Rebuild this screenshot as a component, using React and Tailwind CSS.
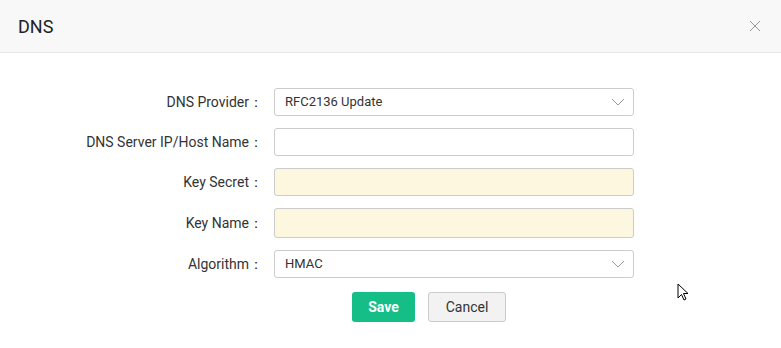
import React from 'react'

function Chevron() {
  return (
    <svg width="14" height="8" viewBox="0 0 14 8" className="absolute right-[9px] top-1/2 -translate-y-1/2">
      <path d="M1 1 L7 7 L13 1" fill="none" stroke="#999" strokeWidth="1" />
    </svg>
  )
}

function Row({ label, children, h = 'h-[28px]' }) {
  return (
    <div className="flex items-center">
      <div className="w-[274px] pr-[11px] text-right text-[14px] text-[#333]">{label}：</div>
      <div className={`relative w-[360px] ${h}`}>{children}</div>
    </div>
  )
}

export default function App() {
  return (
    <div className="w-[781px] h-[348px] bg-white relative overflow-hidden" style={{ fontFamily: 'Roboto, "Liberation Sans", sans-serif' }}>
      <div className="h-[53px] bg-[#f8f8f8] border-b border-[#e8e8e8] flex items-center justify-between pl-[18px] pr-[20px]">
        <span className="text-[18px] text-[#222]">DNS</span>
        <svg width="12" height="12" viewBox="0 0 12 12">
          <path d="M1 1 L11 11 M11 1 L1 11" stroke="#999" strokeWidth="1" />
        </svg>
      </div>
      <div className="flex flex-col gap-[12px] pt-[35px]">
        <Row label="DNS Provider">
          <div className="h-full border border-[#ccc] rounded-[3px] flex items-center px-[10px] text-[13px] text-[#333]">RFC2136 Update</div>
          <Chevron />
        </Row>
        <Row label="DNS Server IP/Host Name">
          <div className="h-full border border-[#ccc] rounded-[3px]" />
        </Row>
        <Row label="Key Secret">
          <div className="h-full border border-[#ccc] rounded-[3px] bg-[#fdf7e0]" />
        </Row>
        <Row label="Key Name" h="h-[30px]">
          <div className="h-full border border-[#ccc] rounded-[3px] bg-[#fdf7e0]" />
        </Row>
        <Row label="Algorithm">
          <div className="h-full border border-[#ccc] rounded-[3px] flex items-center px-[10px] text-[13px] text-[#333]">HMAC</div>
          <Chevron />
        </Row>
      </div>
      <div className="flex gap-[13px] pl-[352px] pt-[14px]">
        <button className="w-[63px] h-[30px] rounded-[3px] bg-[#14be86] text-white text-[14px] font-bold">Save</button>
        <button className="w-[78px] h-[30px] rounded-[3px] bg-[#f2f2f2] border border-[#ccc] text-[#333] text-[14px]">Cancel</button>
      </div>
      <svg width="14" height="20" viewBox="0 0 14 20" className="absolute left-[677px] top-[283px]">
        <path d="M1 1 L1 15 L4.5 11.5 L7 17 L9 16 L6.5 10.5 L11 10.5 Z" fill="#fff" stroke="#000" strokeWidth="1" strokeLinejoin="round" />
      </svg>
    </div>
  )
}
